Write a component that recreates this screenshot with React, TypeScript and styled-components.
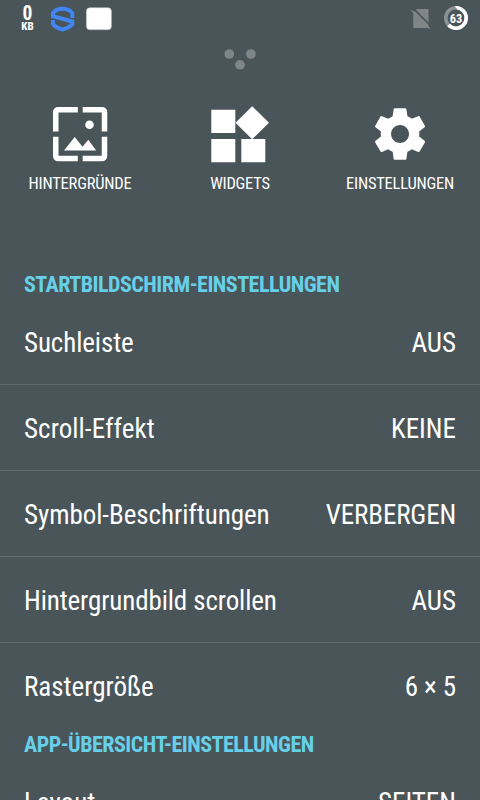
import React from 'react';
import styled, { createGlobalStyle } from 'styled-components';

const Global = createGlobalStyle`
  * { box-sizing: border-box; }
  html, body { margin: 0; padding: 0; background: #4a555a; }
`;

const Screen = styled.main`
  width: 480px;
  height: 800px;
  overflow: hidden;
  display: flex;
  flex-direction: column;
  background: #4a555a;
  color: #fff;
  font-family: 'Roboto Condensed', Roboto, sans-serif;
  font-stretch: 75%;
`;

const StatusBar = styled.header`
  height: 38px;
  flex: none;
  display: flex;
  align-items: flex-start;
  justify-content: space-between;
  padding: 6px 12px 0 20px;
`;

const StatusGroup = styled.div<{ $gap: number }>`
  display: flex;
  gap: ${p => p.$gap}px;
`;

const Traffic = styled.div`
  width: 15px;
  height: 26px;
  margin-right: 5px;
  display: flex;
  flex-direction: column;
  align-items: center;
`;

const TrafficValue = styled.span`
  font-family: Roboto, sans-serif;
  font-stretch: 80%;
  font-weight: 700;
  font-size: 19.5px;
  line-height: 15px;
`;

const TrafficUnit = styled.span`
  font-family: Roboto, sans-serif;
  font-stretch: 85%;
  font-weight: 800;
  font-size: 11px;
  line-height: 11px;
`;

const PageDots = styled.div`
  height: 62px;
  flex: none;
  display: flex;
  justify-content: center;
  padding-top: 10px;
`;

const Actions = styled.nav`
  height: 169px;
  flex: none;
  display: grid;
  grid-template-columns: repeat(3, 160px);
`;

const Action = styled.div`
  display: flex;
  flex-direction: column;
  align-items: center;
  gap: 6px;
`;

const ActionLabel = styled.span`
  font-size: 16.5px;
  line-height: 20px;
  letter-spacing: -0.22px;
  white-space: nowrap;
`;

const Heading = styled.h2`
  margin: 0;
  height: 30px;
  flex: none;
  padding-left: 24px;
  font-size: 22px;
  line-height: 32px;
  font-weight: 700;
  letter-spacing: -0.5px;
  color: #67d0e8;
  white-space: nowrap;
`;

const Row = styled.div<{ $last?: boolean }>`
  height: 86px;
  flex: none;
  display: flex;
  align-items: center;
  justify-content: space-between;
  padding: 2px 24px 0;
  font-size: 27px;
  line-height: 32px;
  white-space: nowrap;
  border-bottom: 1px solid ${p => (p.$last ? 'transparent' : '#606a6f')};
`;

const RowText = styled.span<{ $tracking?: number }>`
  letter-spacing: ${p => p.$tracking ?? 0}px;
`;

interface Setting {
  label: string;
  value: string;
  labelTracking?: number;
  valueTracking?: number;
}

const homeSettings: Setting[] = [
  { label: 'Suchleiste', value: 'AUS', labelTracking: -0.1 },
  { label: 'Scroll-Effekt', value: 'KEINE', labelTracking: 0.08 },
  { label: 'Symbol-Beschriftungen', value: 'VERBERGEN', labelTracking: -0.05, valueTracking: -0.15 },
  { label: 'Hintergrundbild scrollen', value: 'AUS', labelTracking: -0.11 },
  { label: 'Rastergröße', value: '6 × 5', valueTracking: -0.1 },
];

const ShieldIcon = () => (
  <svg width="25" height="26" viewBox="0 0 25 26" fill="none" stroke="#4285f4" strokeWidth="4">
    <path d="M22.300 12V7.200C20 4 16.500 2.800 12.500 2.800S5 4 2.900 7.200V10.200L22.300 15.600V18C20 21 17 22.300 12.500 23.600C8 22.300 5 21 2.900 17.600V14" />
  </svg>
);

const CardIcon = () => (
  <svg width="27" height="26" viewBox="0 0 27 26">
    <rect x="1.400" y="1.700" width="25" height="22" rx="3.500" fill="#fff" stroke="#b9bec0" strokeWidth="0.600" />
  </svg>
);

const NoSimIcon = () => (
  <svg width="20" height="26" viewBox="0 0 20 26">
    <path d="M2.300 6.500L6 3H17.500V22H2.300Z" fill="#7f8688" />
    <path d="M3 3.200L20.500 20.700" stroke="#4a555a" strokeWidth="1.800" />
    <path d="M0.500 4.200L18.800 22.500" stroke="#7f8688" strokeWidth="1.500" />
  </svg>
);

const BatteryIcon = () => (
  <svg width="24" height="24" viewBox="0 0 24 24">
    <circle cx="12" cy="12" r="10.200" fill="none" stroke="#8b9194" strokeWidth="3.600" />
    <circle cx="12" cy="12" r="10.200" fill="none" stroke="#fff" strokeWidth="3.600" pathLength="100" strokeDasharray="63 37" transform="rotate(-90 12 12)" />
    <text x="12" y="16.700" textAnchor="middle" fill="#fff" fontSize="13" fontWeight="700" fontFamily="Roboto, sans-serif" textLength="12.500" lengthAdjust="spacingAndGlyphs">63</text>
  </svg>
);

const WallpaperIcon = () => (
  <svg width="68" height="68" viewBox="0 0 68 68" fill="#fff">
    <path fill="none" stroke="#fff" strokeWidth="5.500" d="M9.750 31.500V12.500Q9.750 9.750 12.500 9.750H31.800M36.700 9.750H55.500Q58.500 9.750 58.500 12.500V31.500M58.500 36.700V55.500Q58.500 58.500 55.500 58.500H36.700M31.800 58.500H12.500Q9.750 58.500 9.750 55.500V36.700" />
    <path d="M18 50.500L28.700 37L36.500 46.800L42.300 39.800L50.200 50.500Z" />
    <circle cx="43.500" cy="24.800" r="4.300" />
  </svg>
);

const WidgetsIcon = () => (
  <svg width="68" height="68" viewBox="0 0 68 68" fill="#fff">
    <path d="M5.300 9.700H29.300V33H5.300ZM5.300 39H29.300V62.300H5.300ZM35.300 39H59.300V62.300H35.300ZM46.200 6.200L63 22.700L46.200 39.200L29.500 22.700Z" />
  </svg>
);

const GearIcon = () => (
  <svg width="68" height="68" viewBox="0 0 68 68">
    <path transform="translate(3.200 3.200) scale(2.570)" fill="#fff" d="M19.430 12.980c.04-.32.07-.64.07-.98s-.03-.66-.07-.98l2.110-1.650c.19-.15.24-.42.12-.64l-2-3.460c-.12-.22-.39-.3-.61-.22l-2.490 1c-.52-.4-1.080-.73-1.690-.98l-.38-2.650C14.460 2.180 14.250 2 14 2h-4c-.25 0-.46.18-.49.42l-.38 2.650c-.61.25-1.170.59-1.690.98l-2.490-1c-.23-.09-.49 0-.61.22l-2 3.460c-.13.22-.07.49.12.64l2.110 1.650c-.04.32-.07.65-.07.98s.03.66.07.98l-2.110 1.650c-.19.15-.24.42-.12.64l2 3.460c.12.22.39.3.61.22l2.490-1c.52.4 1.080.73 1.690.98l.38 2.650c.03.24.24.42.49.42h4c.25 0 .46-.18.49-.42l.38-2.650c.61-.25 1.170-.59 1.690-.98l2.490 1c.23.09.49 0 .61-.22l2-3.460c.12-.22.07-.49-.12-.64l-2.110-1.650zM12 15.500c-1.930 0-3.500-1.570-3.500-3.500s1.570-3.500 3.500-3.500 3.500 1.570 3.500 3.500-1.570 3.500-3.500 3.500z" />
  </svg>
);

const SettingRow = ({ setting, last }: { setting: Setting; last?: boolean }) => (
  <Row $last={last}>
    <RowText $tracking={setting.labelTracking}>{setting.label}</RowText>
    <RowText $tracking={setting.valueTracking}>{setting.value}</RowText>
  </Row>
);

export default function App() {
  return (
    <>
      <Global />
      <Screen>
        <StatusBar>
          <StatusGroup $gap={10}>
            <Traffic>
              <TrafficValue>0</TrafficValue>
              <TrafficUnit>KB</TrafficUnit>
            </Traffic>
            <ShieldIcon />
            <CardIcon />
          </StatusGroup>
          <StatusGroup $gap={13}>
            <NoSimIcon />
            <BatteryIcon />
          </StatusGroup>
        </StatusBar>
        <PageDots>
          <svg width="34" height="24" viewBox="0 0 34 24" fill="#7f8688">
            <circle cx="6.300" cy="6" r="4.800" />
            <circle cx="27.900" cy="6" r="4.800" />
            <circle cx="17" cy="16.800" r="4.800" />
          </svg>
        </PageDots>
        <Actions>
          <Action><WallpaperIcon /><ActionLabel>HINTERGRÜNDE</ActionLabel></Action>
          <Action><WidgetsIcon /><ActionLabel>WIDGETS</ActionLabel></Action>
          <Action><GearIcon /><ActionLabel>EINSTELLUNGEN</ActionLabel></Action>
        </Actions>
        <Heading>STARTBILDSCHIRM-EINSTELLUNGEN</Heading>
        {homeSettings.map((setting, i) => (
          <SettingRow key={setting.label} setting={setting} last={i === homeSettings.length - 1} />
        ))}
        <Heading>APP-ÜBERSICHT-EINSTELLUNGEN</Heading>
        <SettingRow setting={{ label: 'Layout', value: 'SEITEN' }} />
      </Screen>
    </>
  );
}
